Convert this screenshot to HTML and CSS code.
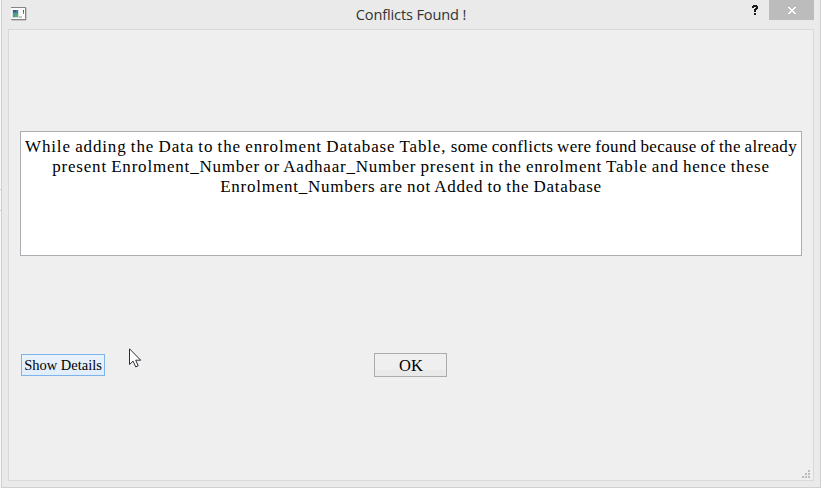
FILE: index.html
```
<!DOCTYPE html>
<html lang="en">
<head>
<meta charset="utf-8">
<title>Conflicts Found !</title>
<link rel="stylesheet" href="styles.css">
</head>
<body>
<div class="backdrop"><div class="backdrop-row"></div></div>
<main class="window">
  <header class="titlebar">
    <svg class="app-icon" width="16" height="14" viewBox="0 0 16 14" shape-rendering="crispEdges">
      <path fill="#fafafa" d="M0 1h15v11H0z"/>
      <path fill="#858585" d="M0 0h15v1H0zM0 12h15v1H0zM14 0h1v13h-1z"/>
      <path fill="#c8c8c8" d="M15 1h1v12h-1zM1 13h14v1H1zM8 9h3v2H8z"/>
      <path fill="#d8dde0" d="M1 3h7v8H1z"/>
      <path fill="#427e9c" d="M2 3h5v3H2z"/>
      <path fill="#4a9a88" d="M2 6h5v4H2z"/>
      <path fill="#55ad78" d="M4 7h3v3H4z"/>
      <path fill="#365d87" d="M2 3h3v2H2zM12 3h1v2h-1z"/>
      <path fill="#50a17c" d="M12 5h1v2h-1z"/>
    </svg>
    <h1 class="title">Conflicts Found !</h1>
    <div class="controls">
      <svg class="help" width="6" height="10" viewBox="0 0 6 10" shape-rendering="crispEdges"><path fill="#1c1c1c" d="M1 0h4v1h1v3H5v1H4v2H2V4h1V3h1V2H2v1H0V1h1zM2 8h2v2H2z"/></svg>
      <div class="close"><svg width="8" height="7" viewBox="0 0 8 7" shape-rendering="crispEdges"><path fill="#fff" d="M0 0h2v1h1v1h2V1h1V0h2v1H7v1H6v1H5v1h1v1h1v1h1v1H6V6H5V5H3v1H2v1H0V6h1V5h1V4h1V3H2V2H1V1H0z"/></svg></div>
    </div>
  </header>
  <section class="client">
    <div class="message">
      <p class="line line-first"><span class="lead">While adding the Data to the enrolment Database Table, </span>some conflicts were found because of the already</p>
      <p class="line line-second">present Enrolment_Number or Aadhaar_Number present in the enrolment Table and hence these</p>
      <p class="line line-third">Enrolment_Numbers are not Added to the Database</p>
    </div>
    <div class="actions">
      <button class="details">Show Details</button>
      <button class="ok">OK</button>
    </div>
    <svg class="grip" width="8" height="8" viewBox="0 0 8 8" shape-rendering="crispEdges"><path fill="#bcbcbc" d="M6 0h2v2H6zM3 3h2v2H3zM6 3h2v2H6zM0 6h2v2H0zM3 6h2v2H3zM6 6h2v2H6z"/></svg>
  </section>
</main>
<svg class="cursor" width="13" height="20" viewBox="0 0 13 20"><path fill="#fff" stroke="#302c38" d="M.5 .8v15.7l3.6-3.4 2.6 5.8 2.5-1.1-2.5-5.6h5z"/></svg>
</body>
</html>
```
FILE: styles.css
```
* { box-sizing: border-box; }
body {
  margin: 0;
  width: 821px;
  height: 488px;
  overflow: hidden;
  display: flex;
  background: #fff;
}
.backdrop { width: 1px; padding-top: 189px; background: #f8f8f8; }
.backdrop-row { height: 22px; border: solid #d4d4d4; border-width: 1px 0; }
.window {
  width: 820px;
  height: 488px;
  padding: 0 6px 6px;
  border: 1px solid #cfcfcf;
  border-top: 0;
  background: #eaeaea;
}
.titlebar {
  height: 29px;
  display: grid;
  grid-template-columns: 1fr auto 1fr;
  align-items: start;
}
.app-icon { margin: 7px 0 0 3px; }
.title {
  margin: 4px 0 0;
  font: 400 14.6px/21px "Open Sans", sans-serif;
  letter-spacing: -0.15px;
  color: #333;
}
.controls { display: flex; justify-content: flex-end; }
.help { margin: 5px 11px 0 0; }
.close {
  width: 45px;
  height: 20px;
  padding: 7px 0 0 19px;
  background: #bcbcbc;
}
.close svg { display: block; }
.client {
  height: 452px;
  padding: 101px 11px 2px;
  border: 1px solid #d9d9d9;
  background: #efefef;
  display: flex;
  flex-direction: column;
}
.message {
  width: 782px;
  height: 125px;
  padding: 5px 0;
  border: 1px solid #abadb3;
  background: #fff;
  font: 17px/20px "Liberation Serif", serif;
  color: #000;
  text-align: center;
  white-space: nowrap;
}
.line { margin: 0; }
.line-first { letter-spacing: 0.34px; word-spacing: -0.8px; }
.lead { letter-spacing: 0.86px; }
.line-second { letter-spacing: 0.8px; word-spacing: -0.8px; }
.line-third { letter-spacing: 0.75px; word-spacing: -0.8px; }
.actions {
  display: grid;
  grid-template-columns: 353px 73px;
  align-items: start;
  margin: 97px 0 0 1px;
}
button { padding: 0; font-family: "Liberation Serif", serif; color: #000; }
.details {
  width: 84px;
  height: 22px;
  margin-top: 1px;
  border: 1px solid #7eb4ea;
  background: linear-gradient(#eaf3fc, #e0edfa);
  font-size: 14.5px;
}
.ok {
  width: 73px;
  height: 24px;
  padding: 2px 0 0 1px;
  border: 1px solid #acacac;
  background: linear-gradient(#efefef 75%, #e9e9e9 75%);
  font-size: 16.5px;
}
.grip { margin: auto -8px 0 auto; }
.cursor { position: absolute; left: 129px; top: 348px; }
```
